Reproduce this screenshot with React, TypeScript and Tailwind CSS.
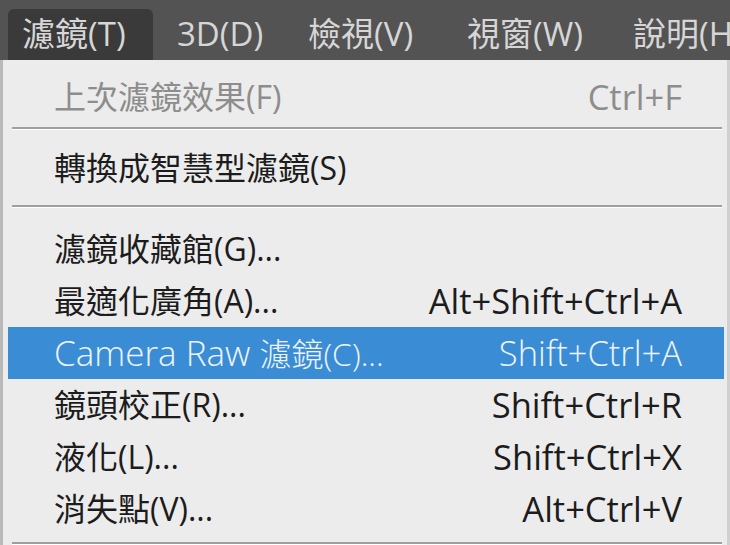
import React from 'react';

type Entry =
  | { kind: 'item'; label: string; latin?: string; shortcut?: string; disabled?: boolean; active?: boolean }
  | { kind: 'sep'; spacing: string };

const font = { fontFamily: '"Open Sans", "Noto Sans CJK TC", sans-serif' };

const topMenus = [
  { label: '濾鏡(T)', open: true, w: '' },
  { label: '3D(D)', w: 'w-[131px]' },
  { label: '檢視(V)', w: 'w-[159px]' },
  { label: '視窗(W)', w: 'w-[166px]' },
  { label: '說明(H)', w: 'w-[140px]' },
];

const entries: Entry[] = [
  { kind: 'item', label: '上次濾鏡效果(F)', shortcut: 'Ctrl+F', disabled: true },
  { kind: 'sep', spacing: 'mt-[4px] mb-[12px]' },
  { kind: 'item', label: '轉換成智慧型濾鏡(S)' },
  { kind: 'sep', spacing: 'mt-[11px] mb-[15px]' },
  { kind: 'item', label: '濾鏡收藏館(G)...' },
  { kind: 'item', label: '最適化廣角(A)...', shortcut: 'Alt+Shift+Ctrl+A' },
  { kind: 'item', latin: 'Camera Raw ', label: '濾鏡(C)...', shortcut: 'Shift+Ctrl+A', active: true },
  { kind: 'item', label: '鏡頭校正(R)...', shortcut: 'Shift+Ctrl+R' },
  { kind: 'item', label: '液化(L)...', shortcut: 'Shift+Ctrl+X' },
  { kind: 'item', label: '消失點(V)...', shortcut: 'Alt+Ctrl+V' },
  { kind: 'sep', spacing: 'mt-[7px] mb-[12px]' },
];

const MenuRow: React.FC<{ entry: Extract<Entry, { kind: 'item' }> }> = ({ entry }) => {
  const color = entry.active
    ? 'bg-[#3a8dd4] text-[#eef4fb] font-light'
    : entry.disabled
    ? 'text-[#8d8d8d]'
    : 'text-[#1c1c1c]';
  return (
    <div className={`ml-[5px] mr-[3px] flex h-[52px] items-center justify-between whitespace-nowrap pl-[46px] pr-[42px] text-[32px] ${color}`}>
      <span>
        {entry.latin && <span className="text-[35px]">{entry.latin}</span>}
        {entry.label}
      </span>
      {entry.shortcut && <span className="text-[34.5px]">{entry.shortcut}</span>}
    </div>
  );
};

export default function App() {
  return (
    <div className="flex h-[545px] w-[730px] flex-col overflow-hidden bg-[#535353]" style={font}>
      {/* menu bar */}
      <div className="flex h-[60px] shrink-0 items-end pl-[8px]">
        {topMenus.map((m) => (
          <div
            key={m.label}
            className={`flex h-[51px] shrink-0 items-center whitespace-nowrap pb-[2px] text-[33px] text-[#d6d6d6] ${
              m.open ? 'w-[145px] rounded-t-[6px] bg-[#3a3a3a] pl-[14px]' : `pl-[24px] ${m.w}`
            }`}
          >
            {m.label}
          </div>
        ))}
      </div>

      {/* dropdown */}
      <div className="flex-1 border-l-[3px] border-r-[3px] border-l-[#b9b9b9] border-r-[#d0d0d0] bg-[#ececec] pt-[11px]">
        {entries.map((e, i) =>
          e.kind === 'sep' ? (
            <div key={i} className={`ml-[9px] mr-[5px] h-[3px] border-b border-white bg-[#9f9f9f] ${e.spacing}`} />
          ) : (
            <MenuRow key={i} entry={e} />
          )
        )}
      </div>
    </div>
  );
}
